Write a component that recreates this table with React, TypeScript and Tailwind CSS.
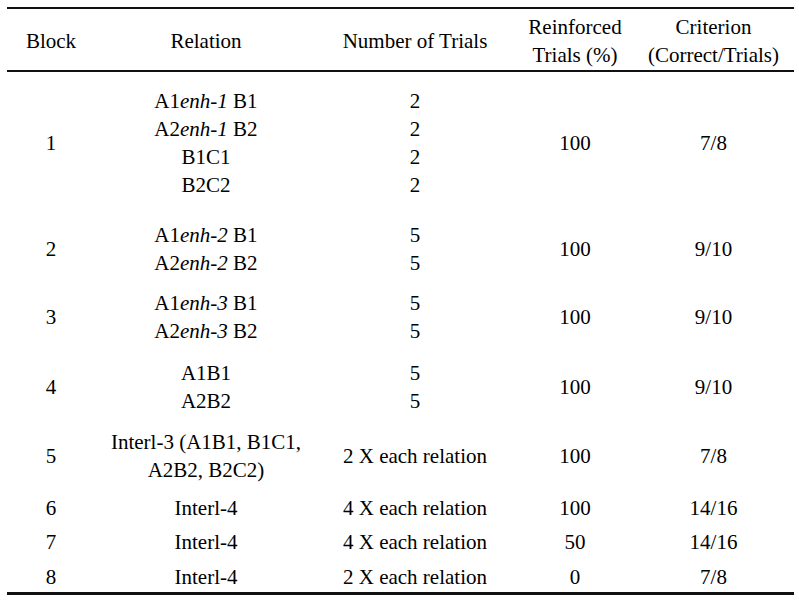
import React from "react";

type Row = {
  block: string;
  relation: React.ReactNode[];
  trials: string[];
  reinforced: string;
  criterion: string;
  gap: string;
};

const cols = "grid grid-cols-[88px_222px_196px_124px_1fr] items-center text-center";

function Enh({ a, n, b }: { a: string; n: number; b: string }) {
  return (
    <>
      {a}
      <i>enh-{n}</i> {b}
    </>
  );
}

const rows: Row[] = [
  {
    block: "1",
    relation: [
      <Enh a="A1" n={1} b="B1" />,
      <Enh a="A2" n={1} b="B2" />,
      "B1C1",
      "B2C2",
    ],
    trials: ["2", "2", "2", "2"],
    reinforced: "100",
    criterion: "7/8",
    gap: "mt-[15px]",
  },
  {
    block: "2",
    relation: [<Enh a="A1" n={2} b="B1" />, <Enh a="A2" n={2} b="B2" />],
    trials: ["5", "5"],
    reinforced: "100",
    criterion: "9/10",
    gap: "mt-[22px]",
  },
  {
    block: "3",
    relation: [<Enh a="A1" n={3} b="B1" />, <Enh a="A2" n={3} b="B2" />],
    trials: ["5", "5"],
    reinforced: "100",
    criterion: "9/10",
    gap: "mt-[12px]",
  },
  {
    block: "4",
    relation: ["A1B1", "A2B2"],
    trials: ["5", "5"],
    reinforced: "100",
    criterion: "9/10",
    gap: "mt-[14px]",
  },
  {
    block: "5",
    relation: ["Interl-3 (A1B1, B1C1,", "A2B2, B2C2)"],
    trials: ["2 X each relation"],
    reinforced: "100",
    criterion: "7/8",
    gap: "mt-[13px]",
  },
  {
    block: "6",
    relation: ["Interl-4"],
    trials: ["4 X each relation"],
    reinforced: "100",
    criterion: "14/16",
    gap: "mt-[10px]",
  },
  {
    block: "7",
    relation: ["Interl-4"],
    trials: ["4 X each relation"],
    reinforced: "50",
    criterion: "14/16",
    gap: "mt-[6px]",
  },
  {
    block: "8",
    relation: ["Interl-4"],
    trials: ["2 X each relation"],
    reinforced: "0",
    criterion: "7/8",
    gap: "mt-[7px]",
  },
];

export default function App() {
  return (
    <div className="w-[799px] h-[602px] bg-white px-[7px] pt-[7px] font-[family-name:Liberation_Serif,Times_New_Roman,serif] text-[21px] leading-[28px] text-black">
      <div className="w-[787px]">
        {/* top rule */}
        <div className="h-[2px] bg-[#111]" />

        {/* header */}
        <div className={`${cols} pt-[4px] pb-[1px]`}>
          <div>Block</div>
          <div>Relation</div>
          <div>Number of Trials</div>
          <div>
            Reinforced
            <br />
            Trials (%)
          </div>
          <div className="pr-[4px]">
            Criterion
            <br />
            (Correct/Trials)
          </div>
        </div>
        <div className="h-[2px] bg-[#111]" />

        {/* body */}
        {rows.map((r) => (
          <div key={r.block} className={`${cols} ${r.gap}`}>
            <div>{r.block}</div>
            <div>
              {r.relation.map((line, i) => (
                <div key={i}>{line}</div>
              ))}
            </div>
            <div>
              {r.trials.map((t, i) => (
                <div key={i}>{t}</div>
              ))}
            </div>
            <div>{r.reinforced}</div>
            <div className="pr-[4px]">{r.criterion}</div>
          </div>
        ))}

        {/* bottom rule */}
        <div className="mt-[1px] h-[3px] bg-[#111]" />
      </div>
    </div>
  );
}
